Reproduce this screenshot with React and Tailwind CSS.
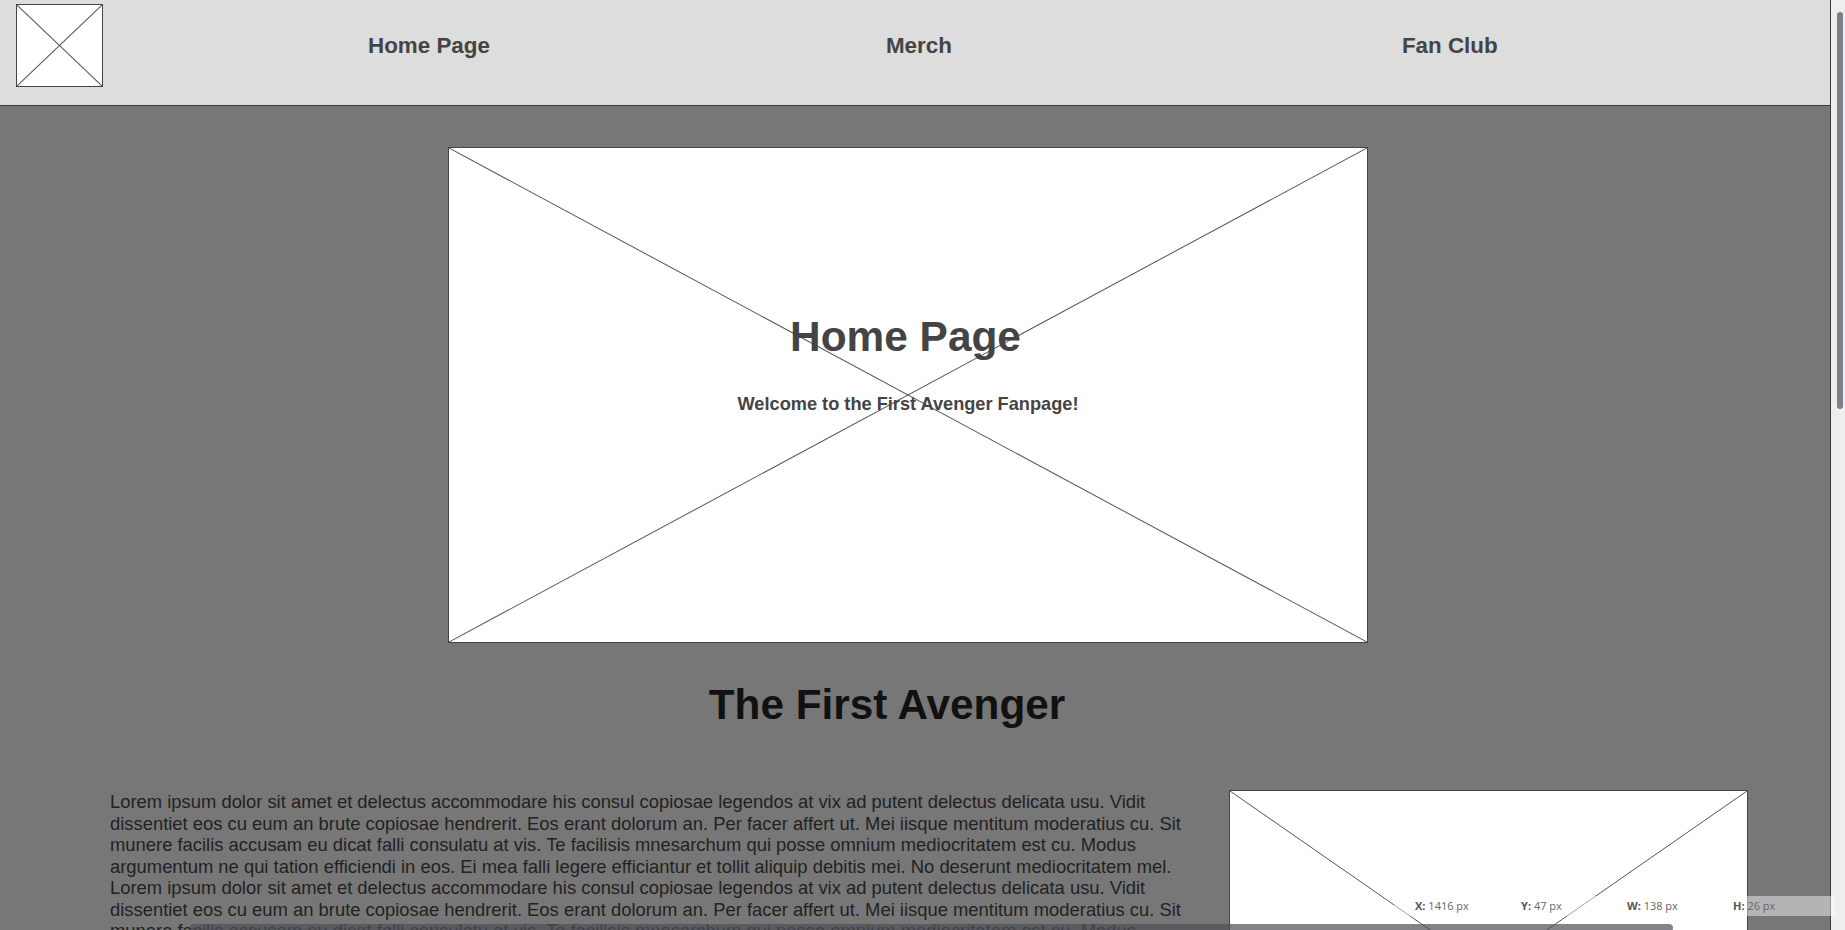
const LOREM =
  'Lorem ipsum dolor sit amet et delectus accommodare his consul copiosae legendos at vix ad putent delectus delicata usu. Vidit dissentiet eos cu eum an brute copiosae hendrerit. Eos erant dolorum an. Per facer affert ut. Mei iisque mentitum moderatius cu. Sit munere facilis accusam eu dicat falli consulatu at vis. Te facilisis mnesarchum qui posse omnium mediocritatem est cu. Modus argumentum ne qui tation efficiendi in eos. Ei mea falli legere efficiantur et tollit aliquip debitis mei. No deserunt mediocritatem mel.';

function Cross() {
  return (
    <svg className="absolute inset-0 h-full w-full" viewBox="0 0 100 100" preserveAspectRatio="none">
      <line x1="0" y1="0" x2="100" y2="100" stroke="#555" strokeWidth="1" vectorEffect="non-scaling-stroke" />
      <line x1="100" y1="0" x2="0" y2="100" stroke="#555" strokeWidth="1" vectorEffect="non-scaling-stroke" />
    </svg>
  );
}

function Placeholder({ className, children }) {
  return (
    <div className={`relative shrink-0 border border-[#444] bg-white ${className}`}>
      <Cross />
      {children}
    </div>
  );
}

function Measure({ label, value }) {
  return (
    <div className="w-[106px] shrink-0 whitespace-nowrap">
      <span className="font-bold text-[#555]">{label}:</span> <span className="text-[#666]">{value}</span>
    </div>
  );
}

export default function App() {
  return (
    <div className="relative flex h-[930px] w-[1845px] overflow-hidden font-['Liberation_Sans',Arial,sans-serif]">
      <div className="flex w-[1831px] shrink-0 flex-col border-r border-[#3a3a3a] bg-[#777]">
        <header className="h-[106px] shrink-0 border-b border-[#3a3a3a] bg-[#ddd]">
          <div className="flex h-[91px] items-center">
            <Placeholder className="ml-4 h-[83px] w-[87px]" />
            <nav className="flex items-center text-[22.4px] font-bold text-[#444]">
              <a className="ml-[265px]">Home Page</a>
              <a className="ml-[396px]">Merch</a>
              <a className="ml-[450px]">Fan Club</a>
            </nav>
          </div>
        </header>

        <main className="flex flex-col">
          <Placeholder className="ml-[448px] mt-[41px] h-[496px] w-[920px]">
            <div className="relative flex flex-col items-center pt-[168px] text-[#444]">
              <h1 className="mr-[5px] text-[42.4px] font-bold leading-none">Home Page</h1>
              <p className="mt-[37px] text-[18.2px] font-bold leading-none">Welcome to the First Avenger Fanpage!</p>
            </div>
          </Placeholder>

          <h2 className="mt-[41px] w-[1774px] text-center text-[42.3px] font-bold leading-none text-[#111]">The First Avenger</h2>

          <div className="mt-[64px] flex items-start">
            <p className="ml-[110px] w-[1100px] shrink-0 pt-[1px] text-[18.4px] leading-[21.5px] text-[#222]">
              {[LOREM, LOREM, LOREM].join(' ')}
            </p>
            <Placeholder className="ml-[19px] h-[361px] w-[519px]" />
          </div>
        </main>
      </div>

      <div className="w-[14px] shrink-0 bg-[#eee]">
        <div className="ml-[6px] mt-[12px] h-[397px] w-[6px] rounded-full bg-[#7e8089]" />
      </div>

      <div className="absolute left-[1394px] top-[896px] flex h-[20px] w-[441px] items-center bg-white/45 pl-[21px] font-['Open_Sans',sans-serif] text-[11px]">
        <Measure label="X" value="1416 px" />
        <Measure label="Y" value="47 px" />
        <Measure label="W" value="138 px" />
        <Measure label="H" value="26 px" />
      </div>

      <div className="absolute left-[190px] top-[924px] h-[8px] w-[1483px] rounded-full bg-[#4e5058]/70" />
    </div>
  );
}
